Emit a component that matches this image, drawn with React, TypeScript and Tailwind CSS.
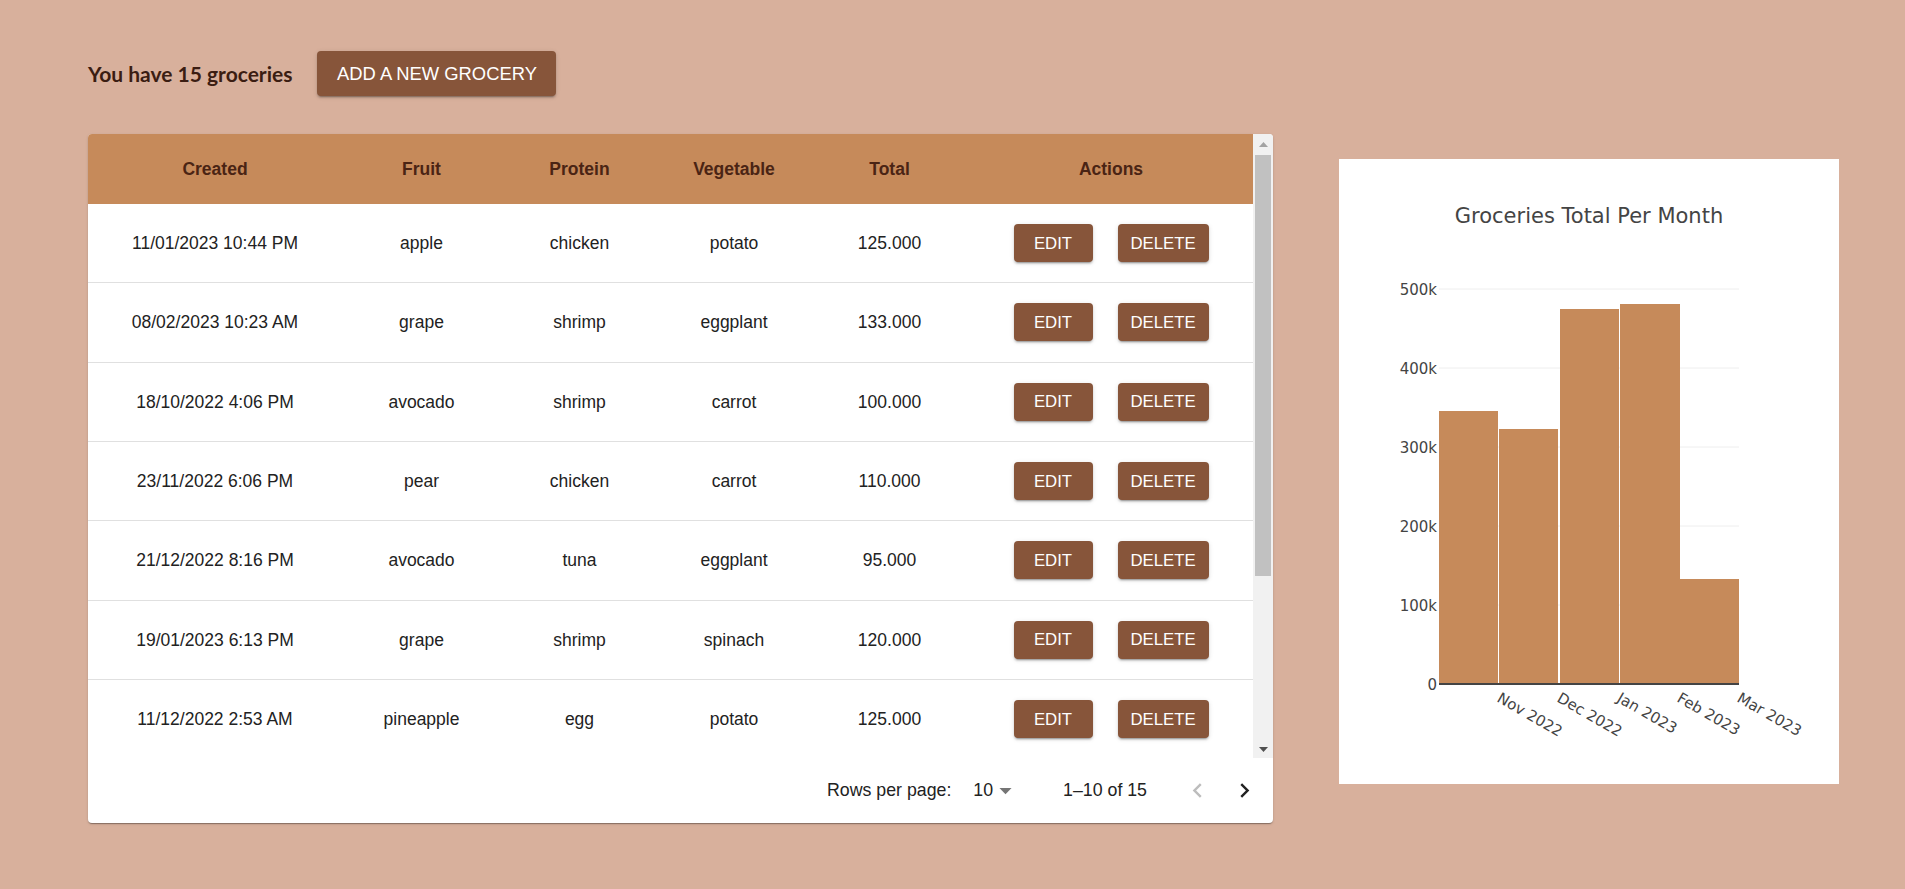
import React from 'react';

const rows = [
  ['11/01/2023 10:44 PM', 'apple', 'chicken', 'potato', '125.000'],
  ['08/02/2023 10:23 AM', 'grape', 'shrimp', 'eggplant', '133.000'],
  ['18/10/2022 4:06 PM', 'avocado', 'shrimp', 'carrot', '100.000'],
  ['23/11/2022 6:06 PM', 'pear', 'chicken', 'carrot', '110.000'],
  ['21/12/2022 8:16 PM', 'avocado', 'tuna', 'eggplant', '95.000'],
  ['19/01/2023 6:13 PM', 'grape', 'shrimp', 'spinach', '120.000'],
  ['11/12/2022 2:53 AM', 'pineapple', 'egg', 'potato', '125.000'],
];

const headers = ['Created', 'Fruit', 'Protein', 'Vegetable', 'Total', 'Actions'];
const grid = 'grid grid-cols-[254px_159px_157px_152px_159px_1fr]';

const btnShadow =
  'shadow-[0_3px_1px_-2px_rgba(0,0,0,0.2),0_2px_2px_0_rgba(0,0,0,0.14),0_1px_5px_0_rgba(0,0,0,0.12)]';

function ActionButton({ label, w }: { label: string; w: string }) {
  return (
    <button
      className={`${w} h-[38px] rounded-[4px] bg-[#87553a] text-white text-[16.75px] uppercase ${btnShadow}`}
    >
      {label}
    </button>
  );
}

function Scrollbar() {
  return (
    <div className="w-[20px] h-[624px] bg-[#f1f1f1] flex flex-col">
      <div className="h-[21px] flex items-center justify-center">
        <svg width="9" height="6" viewBox="0 0 9 6">
          <path d="M4.5 0 9 5H0z" fill="#a3a3a3" />
        </svg>
      </div>
      <div className="flex-1 flex flex-col">
        <div className="mx-[2px] h-[421px] bg-[#c1c1c1]" />
      </div>
      <div className="h-[17px] flex items-center justify-center">
        <svg width="9" height="6" viewBox="0 0 9 6">
          <path d="M0 0h9L4.5 5z" fill="#505050" />
        </svg>
      </div>
    </div>
  );
}

function GroceryTable() {
  return (
    <div className="w-[1185px] h-[689px] bg-white rounded-[4px] overflow-hidden flex flex-col shadow-[0_2px_1px_-1px_rgba(0,0,0,0.2),0_1px_1px_0_rgba(0,0,0,0.14),0_1px_3px_0_rgba(0,0,0,0.12)]">
      <div className="flex">
        <div className="w-[1165px] h-[624px] overflow-hidden">
          <div className={`${grid} h-[70px] bg-[#c68a5a] text-[#4a2414] font-bold text-[17.5px]`}>
            {headers.map((h) => (
              <div key={h} className="flex items-center justify-center whitespace-nowrap">
                {h}
              </div>
            ))}
          </div>
          {rows.map((r, ri) => (
            <div key={ri} className={`${grid} h-[79.33px] border-b border-[#e0e0e0] text-[17.5px] text-[#222]`}>
              {r.map((c, i) => (
                <div key={i} className="flex items-center justify-center whitespace-nowrap">
                  {c}
                </div>
              ))}
              <div className="flex items-center justify-center gap-[25px]">
                <ActionButton label="Edit" w="w-[79px]" />
                <ActionButton label="Delete" w="w-[91px]" />
              </div>
            </div>
          ))}
        </div>
        <Scrollbar />
      </div>
      <div className="flex-1 flex items-center justify-end pr-[14px] text-[17.75px] text-[#222]">
        <span>Rows per page:</span>
        <div className="ml-[22px] flex items-center">
          <span>10</span>
          <svg width="29" height="29" viewBox="0 0 24 24" className="ml-[-2px]">
            <path d="M7 10l5 5 5-5z" fill="#757575" />
          </svg>
        </div>
        <span className="ml-[43px]">1–10 of 15</span>
        <div className="ml-[36px] flex items-center gap-[18px]">
          <svg width="29" height="29" viewBox="0 0 24 24">
            <path d="M15.41 16.59 10.83 12l4.58-4.59L14 6l-6 6 6 6z" fill="#bdbdbd" />
          </svg>
          <svg width="29" height="29" viewBox="0 0 24 24">
            <path d="M8.59 16.59 13.17 12 8.59 7.41 10 6l6 6-6 6z" fill="#222" />
          </svg>
        </div>
      </div>
    </div>
  );
}

const bars = [
  { x: 100, w: 59, top: 252 },
  { x: 160, w: 59, top: 270 },
  { x: 221, w: 59, top: 150 },
  { x: 281, w: 60, top: 145 },
  { x: 341, w: 59, top: 420 },
];
const yTicks = [
  { y: 130, t: '500k' },
  { y: 209, t: '400k' },
  { y: 288, t: '300k' },
  { y: 367, t: '200k' },
  { y: 446, t: '100k' },
];
const xTicks = [
  { x: 160, t: 'Nov 2022' },
  { x: 220, t: 'Dec 2022' },
  { x: 280, t: 'Jan 2023' },
  { x: 340, t: 'Feb 2023' },
  { x: 400, t: 'Mar 2023' },
];

function Chart() {
  const font = '"DejaVu Sans", Verdana, sans-serif';
  return (
    <div className="w-[500px] h-[625px] bg-white mt-[25px] ml-[66px]">
      <svg width="500" height="625" style={{ fontFamily: font }}>
        <text x="250" y="63.5" textAnchor="middle" fontSize="21" fill="#444">
          Groceries Total Per Month
        </text>
        {yTicks.map((t) => (
          <g key={t.t}>
            <line x1="100" x2="400" y1={t.y} y2={t.y} stroke="#eee" strokeWidth="1" />
            <text x="98" y={t.y + 5.5} textAnchor="end" fontSize="15" fill="#444">
              {t.t}
            </text>
          </g>
        ))}
        <text x="98" y="530.5" textAnchor="end" fontSize="15" fill="#444">
          0
        </text>
        {bars.map((b, i) => (
          <rect key={i} x={b.x} y={b.top} width={b.w} height={525 - b.top} fill="#c68a5a" />
        ))}
        <rect x="100" y="524" width="300" height="2" fill="#444" />
        {xTicks.map((t) => (
          <text
            key={t.t}
            x={t.x - 3}
            y="542"
            fontSize="15"
            fill="#444"
            transform={`rotate(30 ${t.x - 3} 542)`}
          >
            {t.t}
          </text>
        ))}
      </svg>
    </div>
  );
}

export default function App() {
  return (
    <div
      className="min-h-screen bg-[#d8b09c] pl-[88px] pt-[51px]"
      style={{ fontFamily: '"Liberation Sans", Arial, sans-serif' }}
    >
      <div className="flex items-center gap-[25px] h-[45px]">
        <h1 className="text-[21px] font-bold text-[#3b1d12] font-['Lato',sans-serif]">You have 15 groceries</h1>
        <button className={`h-[45px] w-[239px] rounded-[4px] bg-[#87553a] text-white text-[18.4px] uppercase ${btnShadow}`}>
          Add a new grocery
        </button>
      </div>
      <div className="flex items-start mt-[38px]">
        <GroceryTable />
        <Chart />
      </div>
    </div>
  );
}
